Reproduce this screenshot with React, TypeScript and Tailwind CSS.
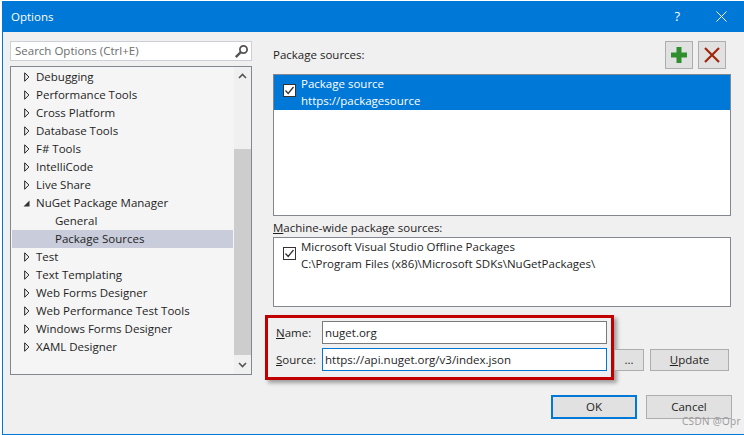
const font = '"Open Sans", "Noto Sans", sans-serif';

function Arrow({ open }: { open?: boolean }) {
  return open ? (
    <svg width="7" height="7" viewBox="0 0 7 7" className="block"><path d="M0.5 6.5H6.5V0.5Z" fill="#333" /></svg>
  ) : (
    <svg width="6" height="10" viewBox="0 0 6 10" className="block"><path d="M0.7 0.8L4.9 5L0.7 9.2Z" fill="none" stroke="#222" strokeWidth="1" /></svg>
  );
}

function TreeRow({ label, kind }: { label: string; kind: "closed" | "open" | "child" | "selected" }) {
  const isChild = kind === "child" || kind === "selected";
  return (
    <div className={`flex h-[18px] items-center ${kind === "selected" ? "bg-[#c9cddb]" : ""}`}>
      <div className="flex w-[24px] shrink-0 items-center justify-end pr-[6px]">
        {!isChild && <Arrow open={kind === "open"} />}
      </div>
      <span className={`text-[11.5px] leading-[18px] text-[#1e1e1e] ${isChild ? "pl-[19px]" : ""}`}>{label}</span>
    </div>
  );
}

function Check() {
  return (
    <div className="flex h-[13px] w-[13px] shrink-0 items-center justify-center border border-[#333] bg-white">
      <svg width="11" height="11" viewBox="0 0 11 11"><path d="M1.5 5.5L4.2 8.4L9.5 2" fill="none" stroke="#333" strokeWidth="1.3" /></svg>
    </div>
  );
}

function Btn({ children, className }: { children: React.ReactNode; className: string }) {
  return (
    <div className={`flex items-center justify-center bg-[#e1e1e1] text-[11.5px] text-[#1e1e1e] ${className}`}>{children}</div>
  );
}

const tree: [string, "closed" | "open" | "child" | "selected"][] = [
  ["Debugging", "closed"],
  ["Performance Tools", "closed"],
  ["Cross Platform", "closed"],
  ["Database Tools", "closed"],
  ["F# Tools", "closed"],
  ["IntelliCode", "closed"],
  ["Live Share", "closed"],
  ["NuGet Package Manager", "open"],
  ["General", "child"],
  ["Package Sources", "selected"],
  ["Test", "closed"],
  ["Text Templating", "closed"],
  ["Web Forms Designer", "closed"],
  ["Web Performance Test Tools", "closed"],
  ["Windows Forms Designer", "closed"],
  ["XAML Designer", "closed"],
];

export default function App() {
  return (
    <div className="h-[435px] w-[744px] overflow-hidden bg-white pl-[2px] pt-[1px]" style={{ fontFamily: font }}>
      <div className="flex h-[434px] w-[742px] flex-col border-b border-l border-[#0078d7] bg-[#f0f0f0]">
        <div className="flex h-[31px] shrink-0 items-center bg-[#0078d7] pl-[8px] text-white">
          <span className="text-[11.5px]">Options</span>
          <span className="ml-auto mr-[36px] text-[13px] leading-none">?</span>
          <svg width="11" height="11" viewBox="0 0 11 11" className="mr-[17px]"><path d="M0.5 0.5L10.5 10.5M10.5 0.5L0.5 10.5" stroke="white" strokeWidth="1" /></svg>
        </div>

        <div className="flex flex-1">
          <div className="ml-[7px] mt-[9px] flex w-[242px] shrink-0 flex-col">
            <div className="flex h-[20px] items-center border border-[#ccced8] bg-white pl-[4px] pr-[2px]">
              <span className="text-[11.5px] text-[#6d6d6d]">Search Options (Ctrl+E)</span>
              <svg width="15" height="15" viewBox="0 0 15 15" className="ml-auto"><circle cx="9.5" cy="5.5" r="3.6" fill="none" stroke="#555" strokeWidth="1.8" /><path d="M6.8 8.2L1.8 13.2" stroke="#555" strokeWidth="2.4" /></svg>
            </div>
            <div className="mt-[5px] flex h-[309px] border border-[#828790] bg-[#f5f5f5]">
              <div className="flex-1 px-[1px] pt-[1px]">
                {tree.map(([l, k]) => <TreeRow key={l} label={l} kind={k} />)}
              </div>
              <div className="flex w-[17px] shrink-0 flex-col items-center bg-[#f0f0f0]">
                <div className="flex h-[17px] items-center justify-center">
                  <svg width="9" height="6" viewBox="0 0 9 6"><path d="M1 5L4.5 1.5L8 5" fill="none" stroke="#555" strokeWidth="1.6" /></svg>
                </div>
                <div className="mt-[65px] h-[206px] w-full bg-[#cdcdcd]" />
                <div className="flex flex-1 items-center justify-center">
                  <svg width="9" height="6" viewBox="0 0 9 6"><path d="M1 1L4.5 4.5L8 1" fill="none" stroke="#555" strokeWidth="1.6" /></svg>
                </div>
              </div>
            </div>
          </div>

          <div className="ml-[21px] flex w-[462px] shrink-0 flex-col">
            <div className="mt-[9px] flex h-[28px] items-center pr-[9px]">
              <span className="text-[11.5px] text-[#1e1e1e]">Package sources:</span>
              <div className="ml-auto flex gap-[5px]">
                <Btn className="h-[28px] w-[28px] border border-[#adadad]">
                  <svg width="16" height="16" viewBox="0 0 16 16"><path d="M5.5 0H10.5V5.5H16V10.5H10.5V16H5.5V10.5H0V5.5H5.5Z" fill="#2f8f2f" /></svg>
                </Btn>
                <Btn className="h-[28px] w-[28px] border border-[#adadad]">
                  <svg width="16" height="16" viewBox="0 0 16 16"><path d="M1 1L15 15M15 1L1 15" stroke="#a1260d" strokeWidth="2.2" /></svg>
                </Btn>
              </div>
            </div>
            <div className="mt-[5px] h-[142px] w-[458px] border border-[#828790] bg-white">
              <div className="flex h-[35px] items-start bg-[#0078d7] text-white">
                <div className="ml-[9px] mr-[5px] mt-[9px]"><Check /></div>
                <div className="text-[11.5px] leading-[17px]">
                  <div>Package source</div>
                  <div>https://packagesource</div>
                </div>
              </div>
            </div>
            <div className="mt-[3px] h-[17px] text-[11.5px] leading-[17px] text-[#1e1e1e]"><u>M</u>achine-wide package sources:</div>
            <div className="mt-[1px] h-[70px] w-[458px] border border-[#828790] bg-white">
              <div className="flex h-[35px] items-start text-[#1e1e1e]">
                <div className="ml-[9px] mr-[5px] mt-[9px]"><Check /></div>
                <div className="text-[11.5px] leading-[17px]">
                  <div>Microsoft Visual Studio Offline Packages</div>
                  <div>C:\Program Files (x86)\Microsoft SDKs\NuGetPackages\</div>
                </div>
              </div>
            </div>

            <div className="mt-[8px] flex items-end">
              <div className="-ml-[8px] flex h-[65px] w-[349px] shrink-0 flex-col gap-[4px] border-[3px] border-[#c00000] pl-[8px] pt-[3px] shadow-[3px_3px_4px_rgba(0,0,0,0.35)]">
                <div className="flex items-center">
                  <span className="w-[46px] text-[11.5px] text-[#1e1e1e]"><u>N</u>ame:</span>
                  <div className="flex h-[23px] w-[285px] items-center border border-[#7a7a7a] bg-white pl-[2px] text-[11.5px] text-[#1e1e1e]">nuget.org</div>
                </div>
                <div className="flex items-center">
                  <span className="w-[46px] text-[11.5px] text-[#1e1e1e]"><u>S</u>ource:</span>
                  <div className="flex h-[23px] w-[285px] items-center border border-[#0078d7] bg-white pl-[2px] text-[11.5px] text-[#1e1e1e]">https://api.nuget.org/v3/index.json</div>
                </div>
              </div>
              <div className="mb-[9px] flex gap-[6px]">
                <Btn className="h-[22px] w-[30px] border border-[#adadad]">...</Btn>
                <Btn className="h-[22px] w-[79px] border border-[#adadad]"><span><u>U</u>pdate</span></Btn>
              </div>
            </div>

            <div className="mt-[15px] flex gap-[9px] pl-[278px]">
              <Btn className="h-[24px] w-[86px] border-2 border-[#0078d7]">OK</Btn>
              <Btn className="h-[24px] w-[86px] border border-[#adadad]">Cancel</Btn>
            </div>
          </div>
        </div>
      </div>
      <span className="absolute left-[682px] top-[414px] text-[10px] tracking-[0.3px] text-[#9a9a9a]">CSDN @Opr</span>
    </div>
  );
}
